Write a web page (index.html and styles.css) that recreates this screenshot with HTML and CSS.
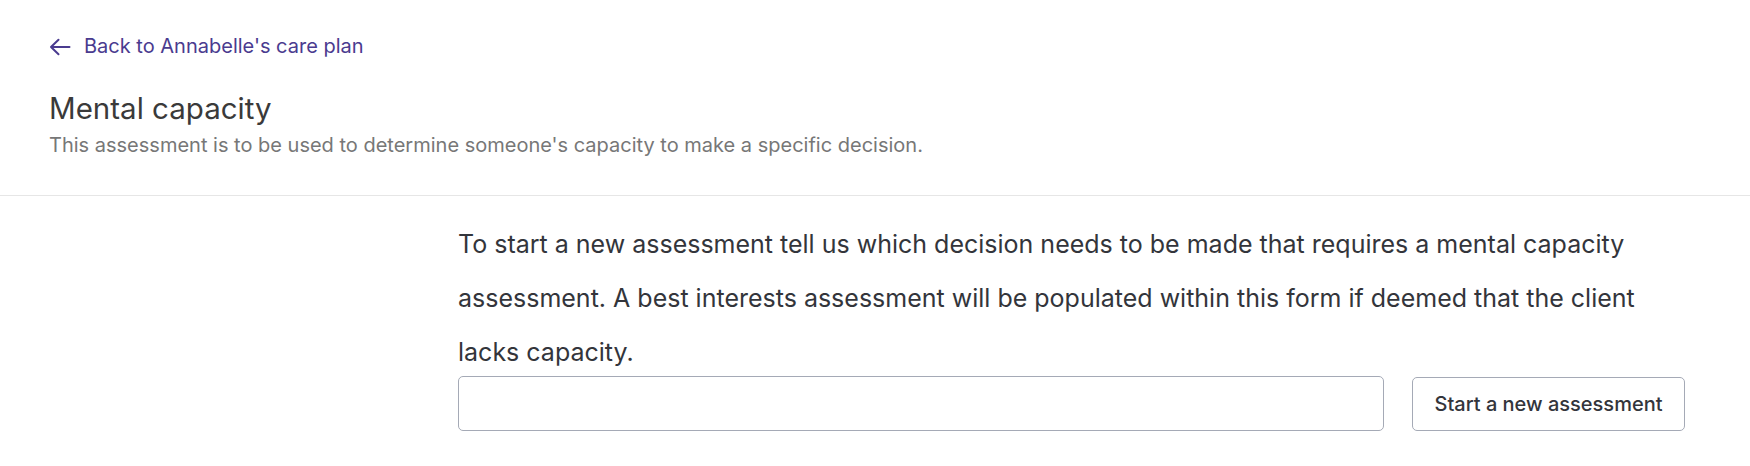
FILE: index.html
```html
<!DOCTYPE html>
<html lang="en">
<head>
<meta charset="utf-8">
<title>Mental capacity</title>
<link rel="stylesheet" href="styles.css">
</head>
<body>
<header class="page-header">
  <a class="back-link" href="#">
    <svg class="back-icon" width="22" height="18" viewBox="0 0 22 18" aria-hidden="true">
      <path d="M20.5 9H2M9.5 1.8L2 9l7.5 7.2" fill="none" stroke="currentColor" stroke-width="2" stroke-linecap="round" stroke-linejoin="round"/>
    </svg>
    <span>Back to Annabelle's care plan</span>
  </a>
  <h1 class="title">Mental capacity</h1>
  <p class="subtitle">This assessment is to be used to determine someone's capacity to make a specific decision.</p>
</header>
<main class="content">
  <div class="panel">
    <p class="intro">To start a new assessment tell us which decision needs to be made that requires a mental capacity assessment. A best interests assessment will be populated within this form if deemed that the client lacks capacity.</p>
    <div class="form-row">
      <input class="decision-input" type="text" aria-label="Decision">
      <button class="start-btn" type="button">Start a new assessment</button>
    </div>
  </div>
</main>
</body>
</html>
```
FILE: styles.css
```css
html, body {
  margin: 0;
  padding: 0;
  background: #ffffff;
}
body {
  font-family: "Inter", "Noto Sans", sans-serif;
  color: #33353b;
}
.page-header {
  padding: 34px 0 38px 49px;
  border-bottom: 1px solid #e6e6e6;
}
.back-link {
  display: flex;
  align-items: center;
  gap: 13px;
  height: 24px;
  font-size: 20px;
  line-height: 24px;
  color: #4a3b8f;
  text-decoration: none;
  width: max-content;
}
.back-icon {
  display: block;
  margin-top: 1px;
}
.title {
  margin: 32px 0 0;
  font-size: 29.5px;
  line-height: 36px;
  font-weight: 400;
  color: #3a3a3a;
}
.subtitle {
  margin: 7px 0 0;
  font-size: 20px;
  line-height: 24px;
  color: #777777;
}
.content {
  padding: 21px 65px 0 458px;
}
.intro {
  margin: 0;
  font-size: 25px;
  line-height: 54px;
  color: #33353b;
}
.form-row {
  display: flex;
  align-items: center;
  gap: 28px;
  margin-top: -3px;
}
.decision-input {
  flex: 1;
  box-sizing: border-box;
  height: 55px;
  border: 1px solid #a5aab6;
  border-radius: 5px;
  padding: 0 14px;
  font: inherit;
  font-size: 20px;
  background: #fff;
}
.start-btn {
  box-sizing: border-box;
  width: 273px;
  height: 54px;
  border: 1px solid #a5aab6;
  border-radius: 5px;
  background: #fff;
  font-family: "Inter", "Noto Sans", sans-serif;
  font-size: 20px;
  font-weight: 500;
  color: #33353b;
  cursor: pointer;
}
```
